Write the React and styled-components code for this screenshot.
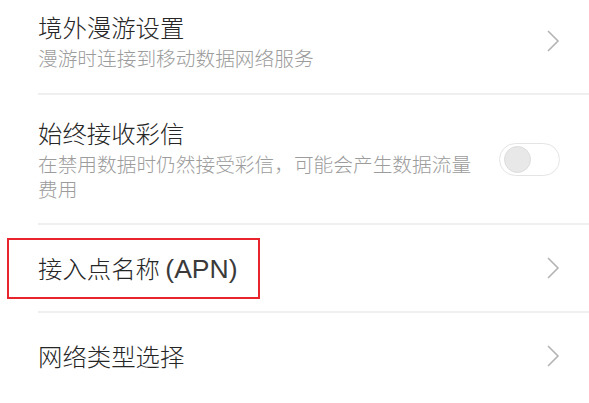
import React from 'react';
import styled, { createGlobalStyle } from 'styled-components';

const GlobalStyle = createGlobalStyle`
  html, body {
    margin: 0;
    padding: 0;
    background: #ffffff;
  }
  body {
    font-family: "Noto Sans CJK SC", "Noto Sans", sans-serif;
    overflow: hidden;
  }
`

const List = styled.div`
  margin-top: -12px;
  width: 589px;
`

const Row = styled.div`
  padding-left: 38px;
  position: relative;
`

const RowInner = styled.div`
  display: flex;
  align-items: center;
  height: ${props => props.height}px;
  padding-right: 29px;
  border-bottom: ${props => (props.last ? 'none' : '2px solid #efefef')};
`

const TextBlock = styled.div`
  flex: 1;
  min-width: 0;
  padding-right: ${props => (props.wrap ? '24px' : '0')};
`

const Title = styled.div`
  font-size: 24.4px;
  font-weight: 300;
  line-height: 30px;
  color: #262626;
`

const Latin = styled.span`
  font-family: "Liberation Sans", Arial, sans-serif;
  font-size: 26.5px;
  font-weight: 400;
  color: #3a3a3a;
`

const Subtitle = styled.div`
  font-size: 19.7px;
  font-weight: 300;
  line-height: 25px;
  margin-top: 3px;
  color: #9c9c9c;
`

const Highlight = styled.div`
  position: absolute;
  left: 7px;
  top: 13px;
  width: 249px;
  height: 57px;
  border: 2px solid #e8242c;
  pointer-events: none;
`

const Toggle = styled.div`
  width: 55px;
  height: 31px;
  border: 1.5px solid #e4e4e4;
  border-radius: 17px;
  background: #ffffff;
  display: flex;
  align-items: center;
  padding-left: 4px;
  box-sizing: content-box;
  flex-shrink: 0;
`

const Knob = styled.div`
  width: 25px;
  height: 25px;
  border-radius: 50%;
  background: #e8e8e8;
  border: 1px solid #dcdcdc;
`

const Chevron = () => (
  <svg width="14" height="24" viewBox="0 0 14 24" style={{ flexShrink: 0 }}>
    <path d="M2 2 L12 12 L2 22" fill="none" stroke="#b4b4b4" strokeWidth="1.6" />
  </svg>
)

const App = () => (
  <>
    <GlobalStyle />
    <List>
      <Row>
        <RowInner height={105}>
          <TextBlock>
            <Title>境外漫游设置</Title>
            <Subtitle>漫游时连接到移动数据网络服务</Subtitle>
          </TextBlock>
          <Chevron />
        </RowInner>
      </Row>
      <Row>
        <RowInner height={128}>
          <TextBlock wrap>
            <Title>始终接收彩信</Title>
            <Subtitle>在禁用数据时仍然接受彩信，可能会产生数据流量费用</Subtitle>
          </TextBlock>
          <Toggle>
            <Knob />
          </Toggle>
        </RowInner>
      </Row>
      <Row>
        <RowInner height={86}>
          <TextBlock>
            <Title>接入点名称 <Latin>(APN)</Latin></Title>
          </TextBlock>
          <Chevron />
        </RowInner>
        <Highlight />
      </Row>
      <Row>
        <RowInner height={86} last>
          <TextBlock>
            <Title>网络类型选择</Title>
          </TextBlock>
          <Chevron />
        </RowInner>
      </Row>
    </List>
  </>
)

export default App;
